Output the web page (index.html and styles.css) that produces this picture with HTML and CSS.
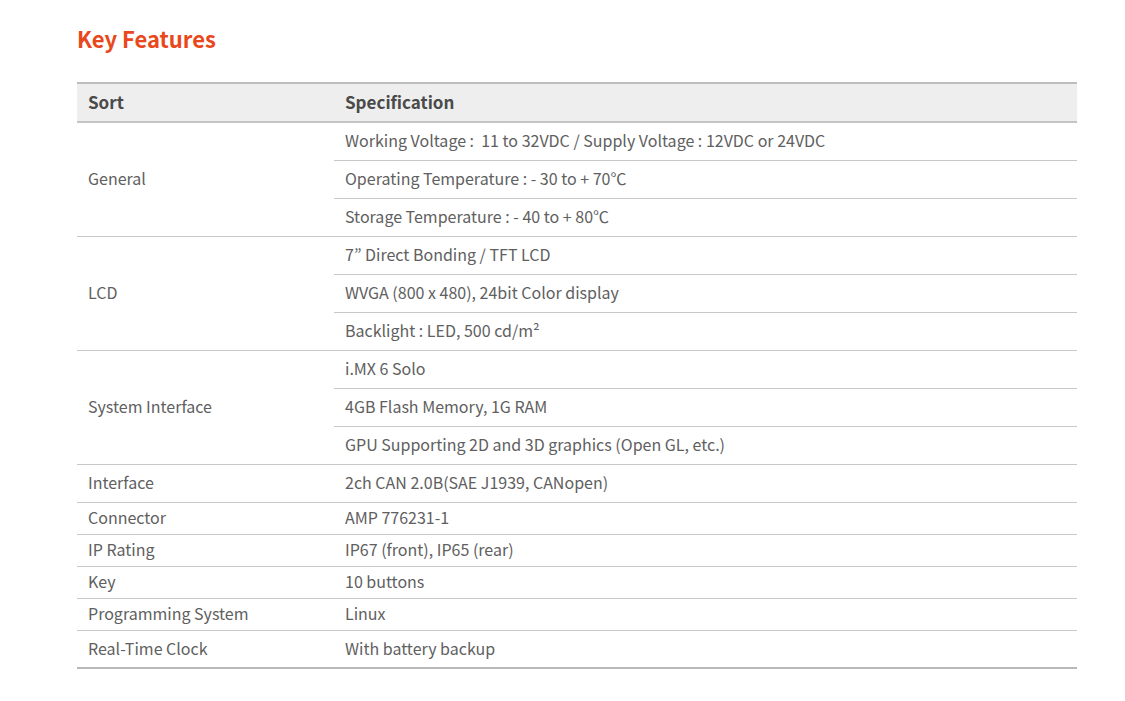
FILE: index.html
```html
<!DOCTYPE html>
<html>
<head>
<meta charset="utf-8">
<link rel="stylesheet" href="styles.css">
</head>
<body>
<div class="page">
  <h2 class="title">Key Features</h2>
  <table class="spec">
    <thead>
      <tr><th class="c1">Sort</th><th>Specification</th></tr>
    </thead>
    <tbody>
      <tr class="g"><td class="c1" rowspan="3">General</td><td>Working Voltage :&nbsp; 11 to 32VDC / Supply Voltage : 12VDC or 24VDC</td></tr>
      <tr class="g"><td>Operating Temperature : - 30 to + 70℃</td></tr>
      <tr class="g"><td>Storage Temperature : - 40 to + 80℃</td></tr>
      <tr class="g"><td class="c1" rowspan="3">LCD</td><td>7” Direct Bonding / TFT LCD</td></tr>
      <tr class="g"><td>WVGA (800 x 480), 24bit Color display</td></tr>
      <tr class="g"><td>Backlight : LED, 500 cd/m²</td></tr>
      <tr class="g"><td class="c1" rowspan="3">System Interface</td><td>i.MX 6 Solo</td></tr>
      <tr class="g"><td>4GB Flash Memory, 1G RAM</td></tr>
      <tr class="g"><td>GPU Supporting 2D and 3D graphics (Open GL, etc.)</td></tr>
      <tr class="g"><td class="c1">Interface</td><td>2ch CAN 2.0B(SAE J1939, CANopen)</td></tr>
      <tr class="s"><td class="c1">Connector</td><td>AMP 776231-1</td></tr>
      <tr class="s"><td class="c1">IP Rating</td><td>IP67 (front), IP65 (rear)</td></tr>
      <tr class="s"><td class="c1">Key</td><td>10 buttons</td></tr>
      <tr class="s"><td class="c1">Programming System</td><td>Linux</td></tr>
      <tr class="last"><td class="c1">Real-Time Clock</td><td>With battery backup</td></tr>
    </tbody>
  </table>
</div>
</body>
</html>
```

FILE: styles.css
```css
html, body {
  margin: 0;
  padding: 0;
  background: #fff;
}
body {
  font-family: "Noto Sans CJK KR", "Open Sans", sans-serif;
  color: #606060;
}
.page {
  padding: 22px 48px 0 77px;
}
.title {
  margin: 0 0 28px 0;
  font-size: 22px;
  font-weight: 700;
  color: #e9481c;
  line-height: 32px;
}
.spec {
  width: 1000px;
  border-collapse: collapse;
  font-size: 16px;
}
.spec th {
  background: #eeeeee;
  border-top: 2px solid #bdbdbd;
  border-bottom: 2px solid #c4c4c4;
  height: 34px;
  padding: 0 11px 3px 11px;
  text-align: left;
  font-weight: 700;
  font-size: 17px;
  color: #4a4a4a;
}
.spec td {
  padding: 0 11px 3px 11px;
  border-bottom: 1px solid #c8c8c8;
  vertical-align: middle;
  line-height: 20px;
}
.spec .c1 {
  width: 235px;
}
.spec tr.g td {
  height: 34px;
}
.spec tr.s td {
  height: 28px;
}
.spec tr.last td {
  height: 33px;
  border-bottom: 2px solid #b8b8b8;
}
```
